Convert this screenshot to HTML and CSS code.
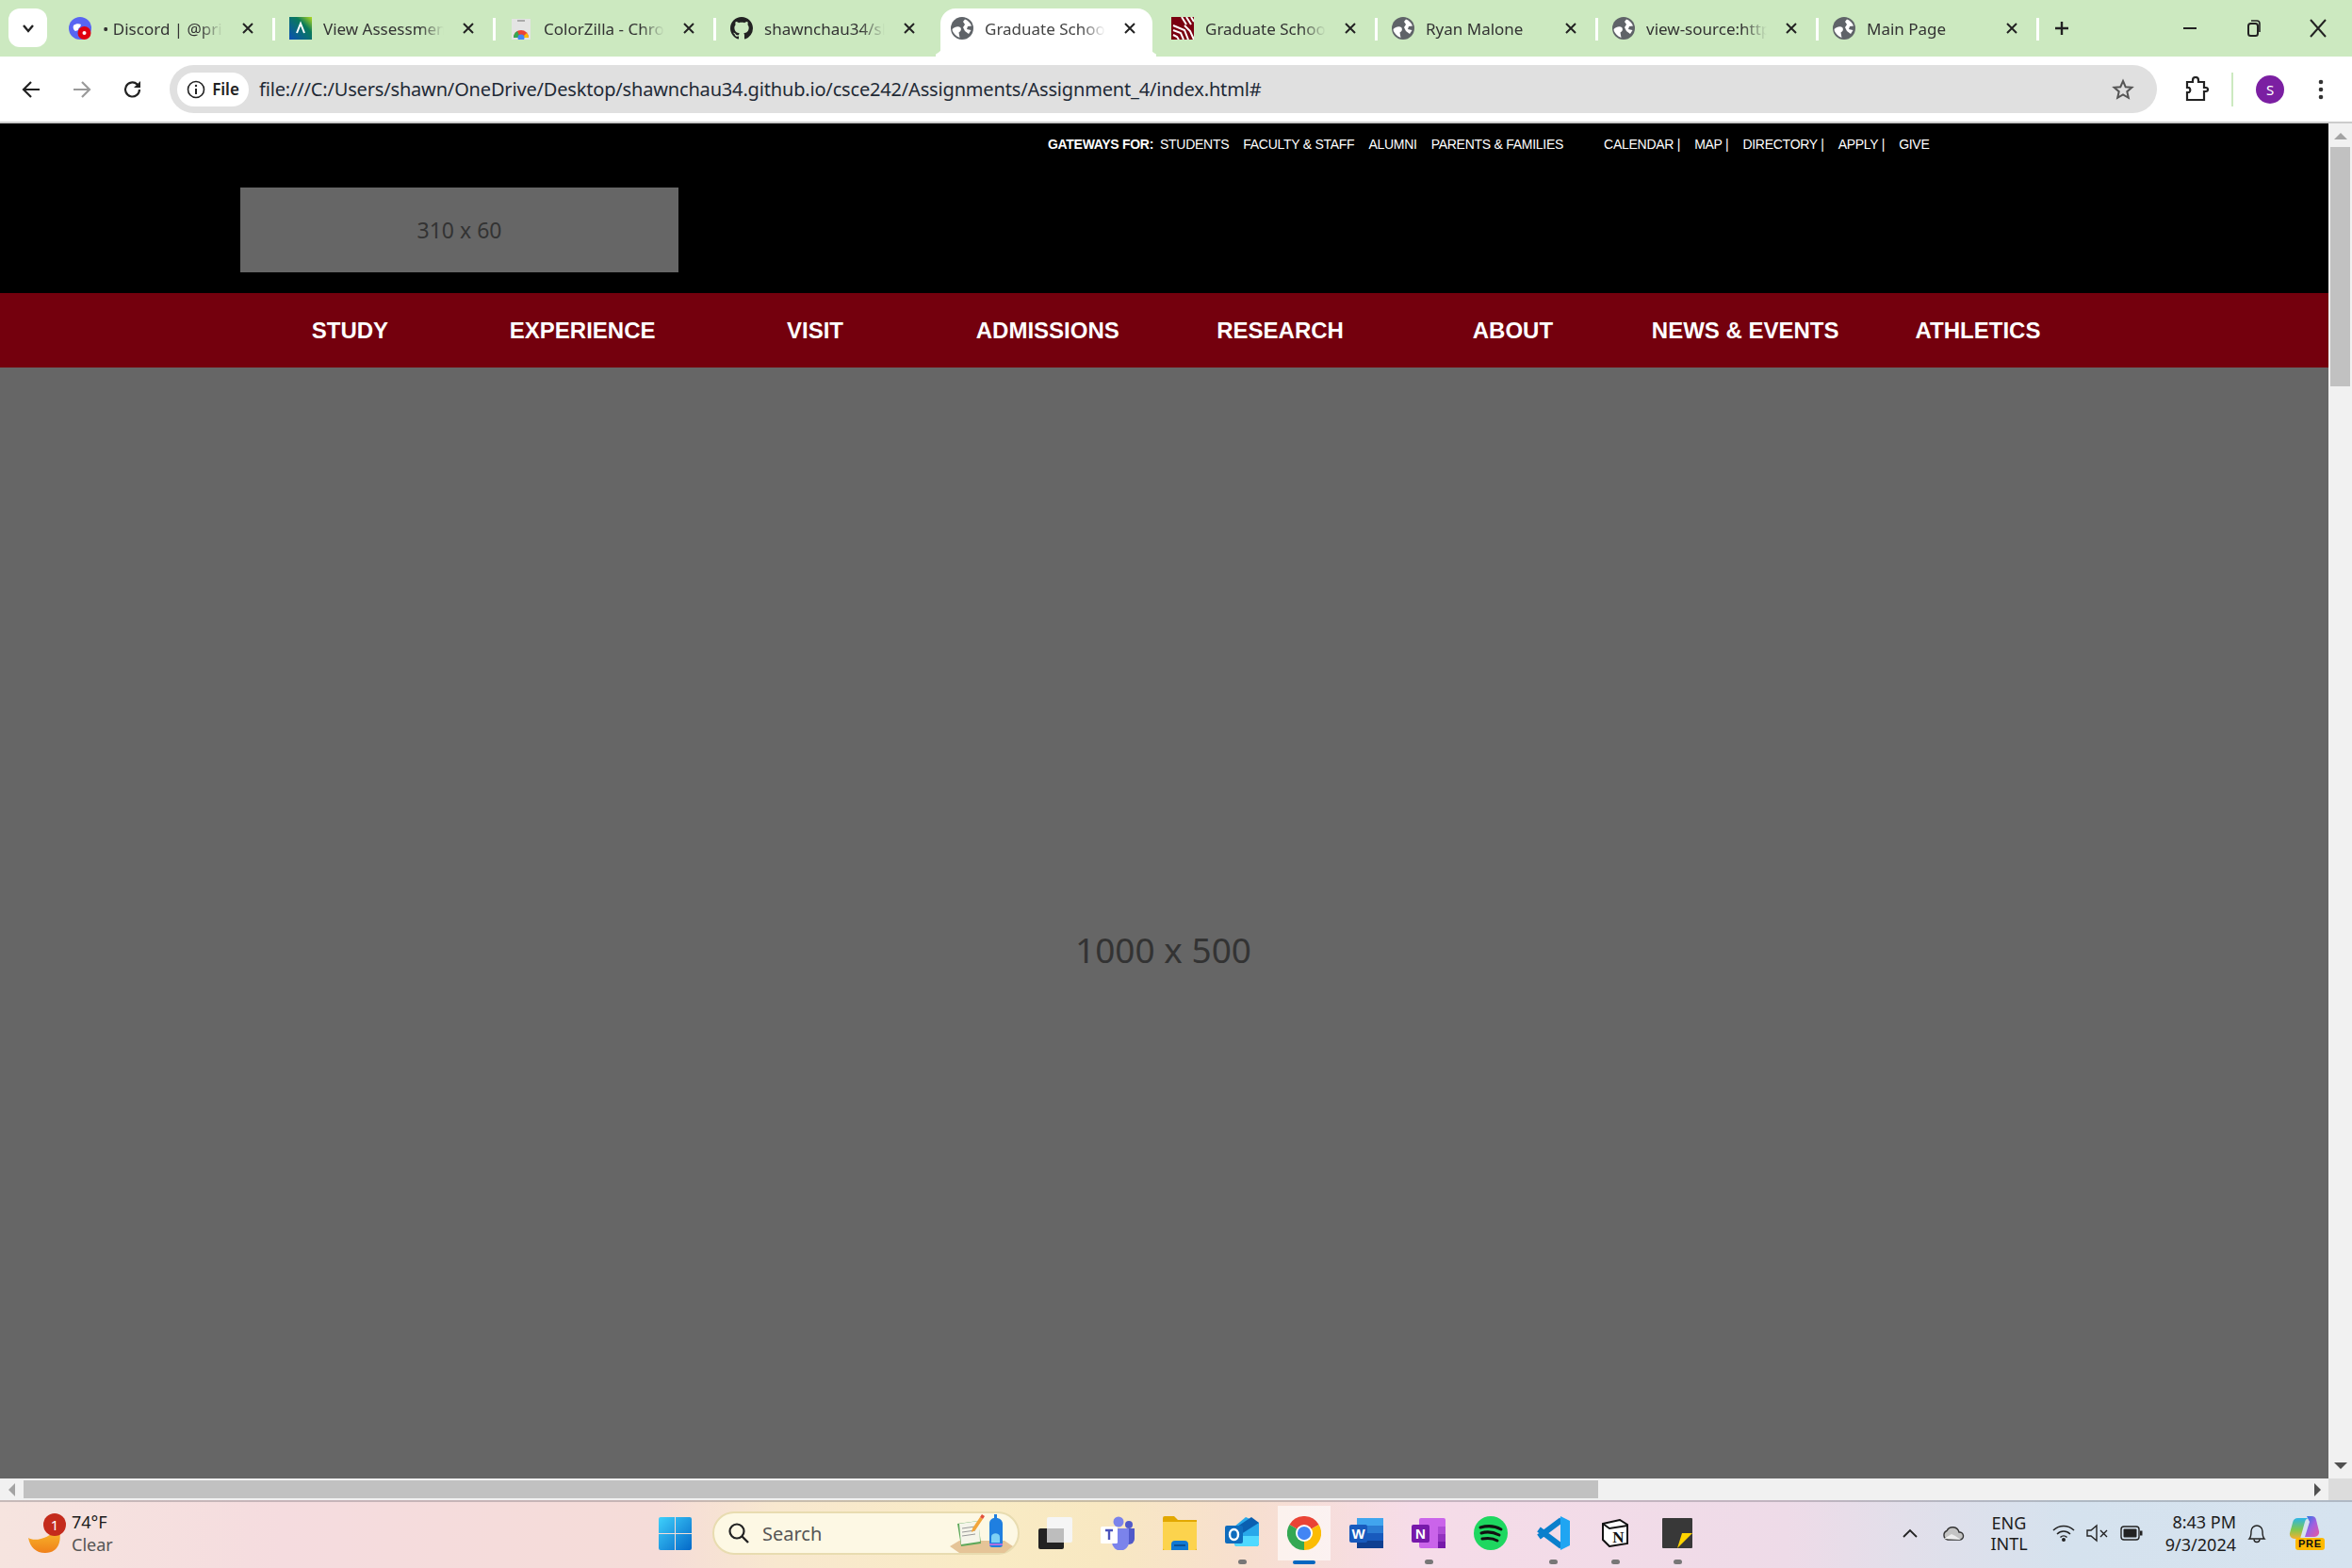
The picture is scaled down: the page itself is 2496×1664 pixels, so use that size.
FILE: index.html
```html
<!DOCTYPE html>
<html lang="en">
<head>
    <meta charset="UTF-8">
    <title>Graduate School</title>
    <link rel="stylesheet" href="styles.css">
</head>
<body>
    <svg class="defs" width="0" height="0">
        <symbol id="globe" viewBox="0 0 24 24">
            <circle cx="12" cy="12" r="12" fill="#5f6368"/>
            <path d="M1.500 13c3-3 7-3.500 9-1.500 1 2 0 4-2 5l1 5.500-3-1.500c-3-2.500-5-5-5-7.500zM15 2.500c3 1 6 4 7 7l-4 .5-1 3 4.500 1-2.500 4-4-3-2-4 2-3-2-3z" fill="#fff"/>
        </symbol>
        <symbol id="close" viewBox="0 0 16 16">
            <path d="M3 3l10 10M13 3L3 13" stroke="#222" stroke-width="2" fill="none"/>
        </symbol>
    </svg>

    <div class="app">
        <!-- tab strip -->
        <div class="tabstrip">
            <div class="tab-search">
                <svg width="16" height="16" viewBox="0 0 16 16"><path d="M3 5l5 6 5-6" stroke="#222" stroke-width="2.400" fill="none"/></svg>
            </div>
            <div class="tabs">
                <div class="tab">
                    <svg class="favicon" viewBox="0 0 24 24">
                        <circle cx="12" cy="12" r="12" fill="#5865f2"/>
                        <path d="M5 9c2-2 6-2.500 8-1l-1 3c-1 0-2 1-2 3l-3 1c-2-1-3-4-2-6z" fill="#fff"/>
                        <circle cx="16.500" cy="17" r="7" fill="#e0000f"/>
                        <circle cx="16.500" cy="17" r="2" fill="#fff"/>
                    </svg>
                    <span class="tab-title">• Discord | @primary</span>
                    <svg class="tab-close"><use href="#close"/></svg>
                </div>
                <div class="tab">
                    <svg class="favicon" viewBox="0 0 24 24">
                        <defs><linearGradient id="aleks" x1="1" y1="0" x2="0" y2="1"><stop offset="0" stop-color="#b5dc20"/><stop offset="0.35" stop-color="#0a7a5a"/><stop offset="1" stop-color="#0a4fb5"/></linearGradient></defs>
                        <rect width="24" height="24" fill="url(#aleks)"/>
                        <path d="M8 17l4-10 4 10" stroke="#fff" stroke-width="2" fill="none"/>
                    </svg>
                    <span class="tab-title">View Assessment</span>
                    <svg class="tab-close"><use href="#close"/></svg>
                </div>
                <div class="tab">
                    <svg class="favicon" viewBox="0 0 24 24">
                        <path d="M2 2h20v22H2z" fill="#e4e4e4"/>
                        <rect x="8" y="3" width="8" height="2" fill="#aaa"/>
                        <path d="M4 22a8 8 0 0 1 16 0z" fill="#ea4335"/>
                        <path d="M4 22a8 8 0 0 1 4-7l3 7z" fill="#34a853"/>
                        <path d="M20 22a8 8 0 0 0-2-5l-5 5z" fill="#fbbc04"/>
                        <circle cx="12" cy="22" r="3.500" fill="#4285f4"/>
                    </svg>
                    <span class="tab-title">ColorZilla - Chrome Web Store</span>
                    <svg class="tab-close"><use href="#close"/></svg>
                </div>
                <div class="tab">
                    <svg class="favicon" viewBox="0 0 16 16"><path fill="#222" d="M8 0C3.580 0 0 3.580 0 8c0 3.540 2.290 6.530 5.470 7.590.4.070.55-.17.55-.38 0-.19-.01-.82-.01-1.490-2.010.37-2.530-.49-2.690-.94-.09-.23-.48-.94-.82-1.130-.28-.15-.68-.52-.01-.53.630-.01 1.080.58 1.230.82.720 1.210 1.870.87 2.330.66.070-.52.280-.87.510-1.070-1.780-.2-3.640-.89-3.640-3.950 0-.87.310-1.590.82-2.150-.08-.2-.36-1.020.08-2.120 0 0 .67-.21 2.200.82.640-.18 1.320-.27 2-.27s1.360.09 2 .27c1.530-1.040 2.200-.82 2.200-.82.440 1.100.16 1.920.08 2.120.51.560.82 1.270.82 2.150 0 3.070-1.870 3.750-3.650 3.950.290.250.540.730.540 1.480 0 1.070-.01 1.930-.01 2.200 0 .21.150.460.550.380A8.010 8.010 0 0 0 16 8c0-4.420-3.580-8-8-8z"/></svg>
                    <span class="tab-title">shawnchau34/shawnchau34.github.io</span>
                    <svg class="tab-close"><use href="#close"/></svg>
                </div>
                <div class="tab active">
                    <svg class="favicon"><use href="#globe"/></svg>
                    <span class="tab-title">Graduate School</span>
                    <svg class="tab-close"><use href="#close"/></svg>
                </div>
                <div class="tab">
                    <svg class="favicon" viewBox="0 0 24 24">
                        <rect width="24" height="24" fill="#7a0010"/>
                        <path d="M11 0l5 8M16 0l5 8M21 0l3 5M2 9l12 5 4 10M2 14l8 3 3 7M2 19l4 2 2 3M14 9l6 6 4 9" stroke="#fff" stroke-width="2" fill="none"/>
                    </svg>
                    <span class="tab-title">Graduate School</span>
                    <svg class="tab-close"><use href="#close"/></svg>
                </div>
                <div class="tab">
                    <svg class="favicon"><use href="#globe"/></svg>
                    <span class="tab-title">Ryan Malone</span>
                    <svg class="tab-close"><use href="#close"/></svg>
                </div>
                <div class="tab">
                    <svg class="favicon"><use href="#globe"/></svg>
                    <span class="tab-title">view-source:https://shawnchau34</span>
                    <svg class="tab-close"><use href="#close"/></svg>
                </div>
                <div class="tab">
                    <svg class="favicon"><use href="#globe"/></svg>
                    <span class="tab-title">Main Page</span>
                    <svg class="tab-close"><use href="#close"/></svg>
                </div>
            </div>
            <svg class="new-tab" width="20" height="20" viewBox="0 0 20 20"><path d="M10 3v14M3 10h14" stroke="#222" stroke-width="2.400"/></svg>
            <div class="window-controls">
                <div class="win-btn"><svg width="18" height="18" viewBox="0 0 18 18"><path d="M2 9h14" stroke="#222" stroke-width="2"/></svg></div>
                <div class="win-btn"><svg width="18" height="20" viewBox="0 0 18 20"><rect x="3" y="5" width="10" height="13" rx="2.500" stroke="#222" stroke-width="2" fill="none"/><path d="M6 2h6a3 3 0 0 1 3 3v9" stroke="#222" stroke-width="1.600" fill="none"/></svg></div>
                <div class="win-btn"><svg width="20" height="22" viewBox="0 0 20 22"><path d="M2 2l16 18M18 2L2 20" stroke="#222" stroke-width="2" fill="none"/></svg></div>
            </div>
        </div>

        <!-- toolbar -->
        <div class="toolbar">
            <div class="nav-btn"><svg width="22" height="22" viewBox="0 0 22 22"><path d="M20 11H3M11 3l-8 8 8 8" stroke="#222" stroke-width="2.200" fill="none"/></svg></div>
            <div class="nav-btn"><svg width="22" height="22" viewBox="0 0 22 22"><path d="M2 11h17M11 3l8 8-8 8" stroke="#9a9a9a" stroke-width="2.200" fill="none"/></svg></div>
            <div class="nav-btn"><svg width="22" height="22" viewBox="0 0 22 22"><path d="M18 11a7.500 7.500 0 1 1-2.500-5.600L18 8" stroke="#222" stroke-width="2.200" fill="none"/><path d="M19 2v7h-7z" fill="#222"/></svg></div>
            <div class="omnibox">
                <div class="file-chip">
                    <svg width="20" height="20" viewBox="0 0 20 20"><circle cx="10" cy="10" r="8.500" stroke="#222" stroke-width="1.600" fill="none"/><path d="M10 9v6" stroke="#222" stroke-width="2"/><circle cx="10" cy="6" r="1.200" fill="#222"/></svg>
                    <span>File</span>
                </div>
                <span class="url">file:///C:/Users/shawn/OneDrive/Desktop/shawnchau34.github.io/csce242/Assignments/Assignment_4/index.html#</span>
                <svg class="star" width="24" height="24" viewBox="0 0 24 24"><path d="M12 3l2.700 6.200 6.700.6-5.100 4.400 1.500 6.600-5.800-3.500-5.800 3.500 1.500-6.600-5.100-4.400 6.700-.6z" stroke="#555" stroke-width="2" fill="none"/></svg>
            </div>
            <div class="toolbar-right">
                <svg width="26" height="28" viewBox="0 0 26 28"><path d="M3 6h6V4a3 3 0 0 1 6 0v2h6v6h2a2 2 0 0 1 0 4h-2v9H3v-8h2a3 3 0 0 0 0-5H3z" stroke="#222" stroke-width="2.200" fill="none"/></svg>
                <div class="toolbar-sep"></div>
                <div class="avatar">S</div>
                <svg width="6" height="24" viewBox="0 0 6 24"><circle cx="3" cy="4" r="2.300" fill="#333"/><circle cx="3" cy="12" r="2.300" fill="#333"/><circle cx="3" cy="20" r="2.300" fill="#333"/></svg>
            </div>
        </div>

        <div class="browser-body">
            <div class="viewport">
                <div class="page">
                    <header class="site-top">
                        <div class="utility">
                            <span class="gateways-label">GATEWAYS FOR:</span>
                            <a class="util-link first">STUDENTS</a>
                            <a class="util-link">FACULTY &amp; STAFF</a>
                            <a class="util-link">ALUMNI</a>
                            <a class="util-link">PARENTS &amp; FAMILIES</a>
                            <a class="util-link group-start">CALENDAR |</a>
                            <a class="util-link">MAP |</a>
                            <a class="util-link">DIRECTORY |</a>
                            <a class="util-link">APPLY |</a>
                            <a class="util-link">GIVE</a>
                        </div>
                        <div class="logo-box">310 x 60</div>
                    </header>
                    <nav class="main-nav">
                        <a class="nav-item">STUDY</a>
                        <a class="nav-item">EXPERIENCE</a>
                        <a class="nav-item">VISIT</a>
                        <a class="nav-item">ADMISSIONS</a>
                        <a class="nav-item">RESEARCH</a>
                        <a class="nav-item">ABOUT</a>
                        <a class="nav-item">NEWS &amp; EVENTS</a>
                        <a class="nav-item">ATHLETICS</a>
                    </nav>
                    <div class="hero">1000 x 500</div>
                </div>
                <div class="hscroll">
                    <div class="scroll-btn"><svg width="10" height="14" viewBox="0 0 10 14"><path d="M8 0v14L1 7z" fill="#a3a3a3"/></svg></div>
                    <div class="hscroll-thumb"></div>
                    <div class="hscroll-rest"><svg width="10" height="14" viewBox="0 0 10 14"><path d="M2 0v14l7-7z" fill="#505050"/></svg></div>
                </div>
            </div>
            <div class="vscroll">
                <div class="vscroll-up"><svg width="14" height="8" viewBox="0 0 14 8"><path d="M0 8h14L7 1z" fill="#a3a3a3"/></svg></div>
                <div class="vscroll-thumb"></div>
                <div class="vscroll-down"><svg width="14" height="8" viewBox="0 0 14 8"><path d="M0 0h14L7 7z" fill="#505050"/></svg></div>
                <div class="scroll-corner"></div>
            </div>
        </div>

        <!-- windows taskbar -->
        <div class="taskbar">
            <div class="weather">
                <div class="weather-icon">
                    <svg width="36" height="28" viewBox="0 0 36 28"><defs><linearGradient id="moon" x1="0" y1="0" x2="0" y2="1"><stop offset="0" stop-color="#f9c22e"/><stop offset="1" stop-color="#f0801a"/></linearGradient></defs><path d="M0 12c6 4 22 2 32-12 4 12 2 28-14 28C8 28 2 22 0 12z" fill="url(#moon)"/></svg>
                    <span class="badge">1</span>
                </div>
                <div class="weather-text">
                    <span>74°F</span>
                    <span class="weather-sub">Clear</span>
                </div>
            </div>

            <div class="start">
                <svg width="35" height="35" viewBox="0 0 35 35"><defs><linearGradient id="win" x1="0" y1="0" x2="1" y2="1"><stop offset="0" stop-color="#3fd0fb"/><stop offset="1" stop-color="#0468c8"/></linearGradient></defs><path d="M0 2a2 2 0 0 1 2-2h15v17H0zM18 0h15a2 2 0 0 1 2 2v15H18zM0 18h17v17H2a2 2 0 0 1-2-2zM18 18h17v15a2 2 0 0 1-2 2H18z" fill="url(#win)"/></svg>
            </div>
            <div class="search-pill">
                <svg width="24" height="24" viewBox="0 0 24 24"><circle cx="10" cy="10" r="7.500" stroke="#222" stroke-width="2.200" fill="none"/><path d="M15.500 15.500L22 22" stroke="#222" stroke-width="2.400"/></svg>
                <span class="search-text">Search</span>
                <svg class="search-art" width="68" height="44" viewBox="0 0 68 44">
                    <path d="M0 36l10-6h48l9 6-9 7H10z" fill="#e5c497"/>
                    <path d="M8 12l22-3 3 24-21 3z" fill="#5da85a"/>
                    <path d="M10 12l21-3 1 22-20 3z" fill="#f5f5ea"/>
                    <path d="M13 17l14-2M13 21l14-2M13 25l14-2" stroke="#999" stroke-width="1"/>
                    <path d="M24 17l8-12 3 2-8 12-4 2z" fill="#f2a53a"/>
                    <path d="M32 5l2-3 3 2-2 3z" fill="#e2503a"/>
                    <path d="M42 12c0-5 4-6 5-6V2h3v4c2 0 6 2 6 6v22a3 3 0 0 1-3 3h-8a3 3 0 0 1-3-3z" fill="#1f7fe0"/>
                    <path d="M44 26c0-5 9-5 9 0v6h-9z" fill="#7dd0f5"/>
                    <path d="M42 33h14v2H42z" fill="#b070e0"/>
                </svg>
            </div>

            <div class="task-icons">
                <div class="task-icon">
                    <svg width="36" height="34" viewBox="0 0 36 34"><rect x="9" width="27" height="27" rx="2" fill="#f5f5f5"/><rect y="12" width="27" height="22" rx="2" fill="#222"/><rect x="9" y="12" width="18" height="15" fill="#bdbdbd"/></svg>
                </div>
                <div class="task-icon">
                    <svg width="36" height="36" viewBox="0 0 36 36"><circle cx="19" cy="6" r="5.500" fill="#7b83eb"/><circle cx="30" cy="9" r="4" fill="#5059c9"/><path d="M24 13h12v11a6 6 0 0 1-12 0z" fill="#5059c9"/><path d="M10 13h20v14a9 9 0 0 1-18 1z" fill="#7b83eb"/><rect y="11" width="18" height="18" rx="1.500" fill="#fff"/><path d="M5 15h8M9 15v10" stroke="#4b53bc" stroke-width="2.400"/></svg>
                </div>
                <div class="task-icon">
                    <svg width="36" height="36" viewBox="0 0 36 36"><path d="M0 2a2 2 0 0 1 2-2h10l4 4h20v32H0z" fill="#e2a800"/><path d="M0 6h36v28a2 2 0 0 1-2 2H2a2 2 0 0 1-2-2z" fill="#fcd34d"/><path d="M9 36v-6a4 4 0 0 1 4-4h10a4 4 0 0 1 4 4v6z" fill="#0f78d4"/><path d="M12 31h12" stroke="#0a4f94" stroke-width="2"/></svg>
                </div>
                <div class="task-icon">
                    <svg width="36" height="34" viewBox="0 0 36 34"><path d="M22 0l14 6v22a3 3 0 0 1-3 3H13a3 3 0 0 1-3-3V10z" fill="#28a8ea"/><path d="M10 12L28 0l8 6-22 14z" fill="#0a5fb0"/><path d="M10 20h26v8a3 3 0 0 1-3 3H13a3 3 0 0 1-3-3z" fill="#50d9ff"/><rect y="9" width="19" height="19" rx="2" fill="#0f6cbd"/><ellipse cx="9.500" cy="18.500" rx="4.500" ry="5.500" fill="none" stroke="#fff" stroke-width="2.400"/></svg>
                    <span class="run-dot"></span>
                </div>
                <div class="task-icon active">
                    <svg width="36" height="36" viewBox="0 0 48 48"><path d="M24 24L3.200 12A24 24 0 0 1 44.800 12z" fill="#ea4335"/><path d="M24 24L44.800 12A24 24 0 0 1 24 48z" fill="#fbbc04"/><path d="M24 24V48A24 24 0 0 1 3.200 12z" fill="#34a853"/><circle cx="24" cy="24" r="12" fill="#fff"/><circle cx="24" cy="24" r="9.500" fill="#4285f4"/></svg>
                    <span class="run-line"></span>
                </div>
                <div class="task-icon">
                    <svg width="36" height="32" viewBox="0 0 36 32"><rect x="8" width="28" height="32" rx="2" fill="#2b7cd3"/><rect x="8" width="28" height="8" fill="#41a5ee"/><rect x="8" y="16" width="28" height="8" fill="#185abd"/><rect x="8" y="24" width="28" height="8" fill="#103f91"/><rect y="7" width="19" height="19" rx="2" fill="#185abd"/><text class="app-letter" x="9.500" y="22">W</text></svg>
                </div>
                <div class="task-icon">
                    <svg width="36" height="32" viewBox="0 0 36 32"><rect x="8" width="28" height="32" rx="2" fill="#ca64ea"/><rect x="28" y="9" width="8" height="8" fill="#ae4bd5"/><rect x="28" y="17" width="8" height="8" fill="#9332bf"/><rect x="28" y="25" width="8" height="7" fill="#7719aa"/><rect y="7" width="19" height="19" rx="2" fill="#7719aa"/><text class="app-letter" x="9.500" y="22">N</text></svg>
                    <span class="run-dot"></span>
                </div>
                <div class="task-icon">
                    <svg width="36" height="36" viewBox="0 0 36 36"><circle cx="18" cy="18" r="18" fill="#1ed760"/><path d="M7 12c7-2 15-2 22 2M8 18c6-2 13-1 19 2M9 24c5-1 11-1 16 2" stroke="#111" stroke-width="3" stroke-linecap="round" fill="none"/></svg>
                </div>
                <div class="task-icon">
                    <svg width="36" height="36" viewBox="0 0 36 36"><path d="M27 4L3 22M27 32L3 14" stroke="#0a7fcc" stroke-width="6" fill="none"/><path d="M26 0l10 5v26l-10 5z" fill="#1fa5f2"/></svg>
                    <span class="run-dot"></span>
                </div>
                <div class="task-icon">
                    <svg width="28" height="30" viewBox="0 0 28 30"><path d="M1 5l18-4 8 5v20l-19 3-7-7z" fill="#fff" stroke="#111" stroke-width="2"/><path d="M1 5l7 5 19-3" stroke="#111" stroke-width="2" fill="none"/><text class="notion-letter" x="17.500" y="25">N</text></svg>
                    <span class="run-dot"></span>
                </div>
                <div class="task-icon">
                    <svg width="32" height="32" viewBox="0 0 32 32"><path d="M1 0h30a1 1 0 0 1 1 1v30a1 1 0 0 1-1 1H1a1 1 0 0 1-1-1V1a1 1 0 0 1 1-1z" fill="#383838"/><path d="M21 16h11L16 32z" fill="#ffd400"/></svg>
                    <span class="run-dot"></span>
                </div>
            </div>

            <div class="tray">
                <svg class="tray-chevron" width="18" height="12" viewBox="0 0 18 12"><path d="M2 10l7-7 7 7" stroke="#222" stroke-width="1.800" fill="none"/></svg>
                <svg class="tray-cloud" width="24" height="16" viewBox="0 0 24 16"><path d="M6 15a5 5 0 0 1-1-9.500 7 7 0 0 1 13 1.500 4 4 0 0 1 1 8z" fill="#c4c4c4" stroke="#333" stroke-width="1.400"/><path d="M2 14l8-5 4 2 6 4z" fill="#eee"/></svg>
                <div class="lang"><span>ENG</span><span>INTL</span></div>
                <svg class="tray-wifi" width="24" height="20" viewBox="0 0 24 20"><path d="M1 7c6-6 16-6 22 0M5 11c4-4 10-4 14 0M8.500 14.500c2-2 5-2 7 0" stroke="#222" stroke-width="1.500" fill="none"/><circle cx="12" cy="17" r="2" fill="#222"/></svg>
                <svg class="tray-mute" width="24" height="20" viewBox="0 0 24 20"><path d="M1 7h4l6-5v16l-6-5H1z" stroke="#222" stroke-width="1.400" fill="none"/><path d="M15 7l7 7M22 7l-7 7" stroke="#222" stroke-width="1.400"/></svg>
                <svg class="tray-battery" width="24" height="16" viewBox="0 0 24 16"><rect x="1" y="1" width="19" height="14" rx="3" stroke="#222" stroke-width="1.400" fill="none"/><rect x="3.500" y="3.500" width="14" height="9" rx="1" fill="#222"/><rect x="21" y="5.500" width="2.500" height="5" fill="#222"/></svg>
                <div class="clock"><span>8:43 PM</span><span>9/3/2024</span></div>
                <svg class="tray-bell" width="20" height="22" viewBox="0 0 20 22"><path d="M2 17c2-2 2-4 2-8a6 6 0 0 1 12 0c0 4 0 6 2 8z" stroke="#222" stroke-width="1.400" fill="none"/><path d="M7 17.500a3 3 0 0 0 6 0" stroke="#222" stroke-width="1.400" fill="none"/></svg>
                <div class="copilot">
                    <svg width="34" height="28" viewBox="0 0 34 28"><defs><linearGradient id="cop" x1="0" y1="0" x2="0" y2="1"><stop offset="0" stop-color="#2bb5e8"/><stop offset="0.55" stop-color="#7ec850"/><stop offset="1" stop-color="#f5b030"/></linearGradient><linearGradient id="cop2" x1="0" y1="0" x2="1" y2="1"><stop offset="0" stop-color="#1e78e5"/><stop offset="0.5" stop-color="#a060e0"/><stop offset="1" stop-color="#e858a0"/></linearGradient></defs><path d="M19 0h5a5 5 0 0 1 5 4l3 12a5 5 0 0 1-5 6h-10l5-16z" fill="url(#cop2)"/><path d="M10 2h12c-3 0-4 1-5 4l-5 18H6a5 5 0 0 1-5-6l3-11a6 6 0 0 1 6-5z" fill="url(#cop)"/></svg>
                    <span class="pre-badge">PRE</span>
                </div>
            </div>
        </div>
    </div>
</body>
</html>
```

FILE: styles.css
```css
* { box-sizing: border-box; }
html, body { margin: 0; padding: 0; }
body { font-family: "Noto Sans", "Open Sans", sans-serif; overflow: hidden; }
.defs { position: absolute; }
.app { width: 2496px; height: 1664px; display: flex; flex-direction: column; overflow: hidden; background: #fff; }

/* tab strip */
.tabstrip { height: 60px; flex: none; display: flex; background-color: #cce9c0; padding-left: 9px; }
.tab-search { width: 41px; height: 41px; margin-top: 9px; margin-right: 7px; flex: none; border-radius: 12px; background-color: #fff; display: flex; align-items: center; justify-content: center; }
.tabs { display: flex; flex: none; }
.tab { width: 234px; height: 60px; position: relative; display: flex; align-items: center; padding: 0 20px 0 16px; font-size: 17px; color: #333; }
.tab::before { content: ""; position: absolute; right: -1px; top: 19px; width: 3px; height: 24px; background-color: #fff; }
.tab:nth-child(4)::before, .tab.active::before { display: none; }
.tab.active::after { content: ""; position: absolute; left: 5px; right: 4px; top: 9px; bottom: 0; background-color: #fff; border-radius: 16px 16px 0 0; z-index: 0; }
.tab.active > * { position: relative; z-index: 1; }
.tab.active { background: radial-gradient(circle at 0 0, transparent 17px, #fff 18px) -8px 42px / 18px 18px no-repeat, radial-gradient(circle at 100% 0, transparent 17px, #fff 18px) 224px 42px / 18px 18px no-repeat; color: #444; }
.favicon { width: 24px; height: 24px; flex: none; margin-right: 12px; }
.tab-title { flex: 1; min-width: 0; white-space: nowrap; overflow: hidden; margin-top: 1px; -webkit-mask-image: linear-gradient(90deg, #000 80%, transparent 100%); mask-image: linear-gradient(90deg, #000 80%, transparent 100%); }
.tab-close { width: 16px; height: 16px; flex: none; margin-left: 18px; }
.new-tab { margin: 20px 0 0 15px; flex: none; }
.window-controls { margin-left: auto; margin-right: 2px; display: flex; }
.win-btn { width: 68px; height: 60px; display: flex; align-items: center; justify-content: center; }

/* toolbar */
.toolbar { height: 71px; flex: none; background-color: #fff; border-bottom: 2px solid #ccc; border-radius: 16px 16px 0 0; display: flex; align-items: center; padding-left: 6px; }
.nav-btn { width: 54px; height: 40px; flex: none; display: flex; align-items: center; justify-content: center; }
.omnibox { width: 2109px; height: 51px; margin-left: 12px; flex: none; background-color: #e0e0e0; border-radius: 26px; display: flex; align-items: center; padding-left: 8px; padding-right: 24px; }
.file-chip { width: 76px; height: 36px; flex: none; background-color: #fff; border-radius: 18px; display: flex; align-items: center; justify-content: center; gap: 7px; font-size: 17px; font-weight: 600; color: #222; }
.url { margin-left: 11px; font-size: 20px; letter-spacing: -0.170px; color: #1f2a36; white-space: nowrap; flex: 1; }
.star { flex: none; }
.toolbar-right { display: flex; align-items: center; flex: none; margin-left: 29px; }
.toolbar-sep { width: 2px; height: 36px; margin: 0 24px 0 24px; background-color: #cce9c0; }
.avatar { width: 30px; height: 30px; border-radius: 50%; background-color: #7b1fa2; color: #fff; font-size: 15px; display: flex; align-items: center; justify-content: center; margin-right: 36px; }

/* browser body */
.browser-body { flex: 1; min-height: 0; display: flex; }
.viewport { flex: 1; min-width: 0; display: flex; flex-direction: column; }
.page { flex: 1; min-height: 0; overflow: hidden; background-color: #666; }
.site-top { height: 180px; background-color: #000; }
.utility { height: 44px; padding-left: 1112px; display: flex; align-items: center; font-family: "Liberation Sans", Arial, sans-serif; font-size: 14px; letter-spacing: -0.270px; color: #fff; white-space: nowrap; margin-bottom: 24px; }
.gateways-label { font-weight: bold; letter-spacing: -0.300px; }
.util-link { margin-left: 15px; color: #fff; }
.util-link.first { margin-left: 7px; }
.util-link.group-start { margin-left: 43px; }
.logo-box { width: 465px; height: 90px; margin-left: 255px; background-color: #666; color: #333; font-size: 23px; display: flex; align-items: center; justify-content: center; }
.main-nav { height: 79px; background-color: #74000d; padding-left: 248px; display: flex; align-items: center; }
.nav-item { width: 246.800px; flex: none; text-align: center; font-family: "Liberation Sans", Arial, sans-serif; font-size: 24px; font-weight: bold; color: #fff; }
.hero { height: 1234px; background-color: #666; color: #333; font-size: 37px; display: flex; align-items: center; justify-content: center; padding-right: 2px; }

/* scrollbars */
.hscroll { height: 23px; flex: none; display: flex; background-color: #f1f1f1; }
.scroll-btn { width: 25px; flex: none; display: flex; align-items: center; justify-content: center; }
.hscroll-thumb { width: 1671px; margin: 2px 0; flex: none; background-color: #c1c1c1; }
.hscroll-rest { flex: 1; display: flex; align-items: center; justify-content: flex-end; padding-right: 7px; }
.vscroll { width: 25px; flex: none; display: flex; flex-direction: column; background-color: #f1f1f1; align-items: center; }
.vscroll-up { height: 25px; flex: none; display: flex; align-items: center; justify-content: center; }
.vscroll-thumb { width: 21px; height: 254px; flex: none; background-color: #c1c1c1; }
.vscroll-down { margin-top: auto; height: 23px; padding-bottom: 4px; flex: none; display: flex; align-items: center; justify-content: center; }
.scroll-corner { width: 25px; height: 23px; flex: none; background-color: #dcdcdc; }

/* taskbar */
.taskbar { height: 72px; flex: none; display: flex; align-items: center; padding-bottom: 4px; border-top: 2px solid rgba(90,90,100,0.3); background: linear-gradient(90deg, #f6e4df 0, #f5dcdf 12%, #f5dcd8 28%, #f8e8cf 33%, #f9ebc4 42%, #f8e8c2 47%, #f7dfcf 53%, #f6dce8 60%, #eedbe8 76%, #e2dfea 81%, #d5e2ee 88%, #d6e3ef 100%); }
.weather { width: 699px; flex: none; display: flex; align-items: center; padding-left: 30px; }
.weather-icon { width: 36px; height: 42px; position: relative; display: flex; align-items: flex-end; margin-right: 10px; }
.badge { position: absolute; left: 16px; top: 0; width: 24px; height: 24px; border-radius: 50%; background-color: #c42b1c; color: #fff; font-size: 15px; display: flex; align-items: center; justify-content: center; }
.weather-text { display: flex; flex-direction: column; font-size: 18px; line-height: 24px; color: #1a1a1a; }
.weather-sub { color: #555; }
.start { width: 35px; height: 35px; flex: none; }
.search-pill { width: 326px; height: 46px; margin-left: 22px; flex: none; border-radius: 23px; background-color: #fdf8e4; border: 2px solid #e8dcb0; display: flex; align-items: center; padding-left: 14px; padding-right: 4px; }
.search-text { margin-left: 13px; font-size: 20px; color: #555; flex: 1; }
.search-art { flex: none; }
.task-icons { display: flex; margin-left: 5px; flex: none; }
.task-icon { width: 66px; height: 70px; position: relative; display: flex; align-items: center; justify-content: center; }
.task-icon.active { background-color: rgba(255,255,255,0.6); border-radius: 6px; background-clip: content-box; padding: 6px 5px; }
.run-dot { position: absolute; left: 29px; bottom: 2px; width: 9px; height: 5px; border-radius: 3px; background-color: #777; }
.run-line { position: absolute; left: 21px; bottom: 2px; width: 24px; height: 4px; border-radius: 2px; background-color: #0067c0; }
.app-letter { font-family: "Liberation Sans", Arial, sans-serif; font-size: 15px; font-weight: bold; fill: #fff; text-anchor: middle; }
.notion-letter { font-family: "Liberation Serif", serif; font-size: 17px; font-weight: bold; fill: #111; text-anchor: middle; }
.tray { flex: 1; min-width: 0; display: flex; align-items: center; padding-left: 205px; color: #1c1c1c; }
.tray svg { flex: none; }
.tray-cloud { margin-left: 25px; }
.lang { width: 60px; margin-left: 17px; display: flex; flex-direction: column; align-items: center; font-size: 18px; line-height: 22px; }
.tray-wifi { margin-left: 16px; }
.tray-mute { margin-left: 12px; }
.tray-battery { margin-left: 12px; }
.clock { width: 99px; display: flex; flex-direction: column; align-items: flex-end; font-size: 18px; line-height: 24px; }
.tray-bell { margin-left: 12px; }
.copilot { position: relative; width: 36px; height: 36px; margin-left: 24px; flex: none; }
.pre-badge { position: absolute; right: -2px; bottom: 0; height: 13px; padding: 0 3px; border-radius: 3px; background-color: #ffb900; color: #111; font-family: "Liberation Sans", Arial, sans-serif; font-size: 11px; line-height: 13px; font-weight: bold; letter-spacing: 0.800px; }
```
